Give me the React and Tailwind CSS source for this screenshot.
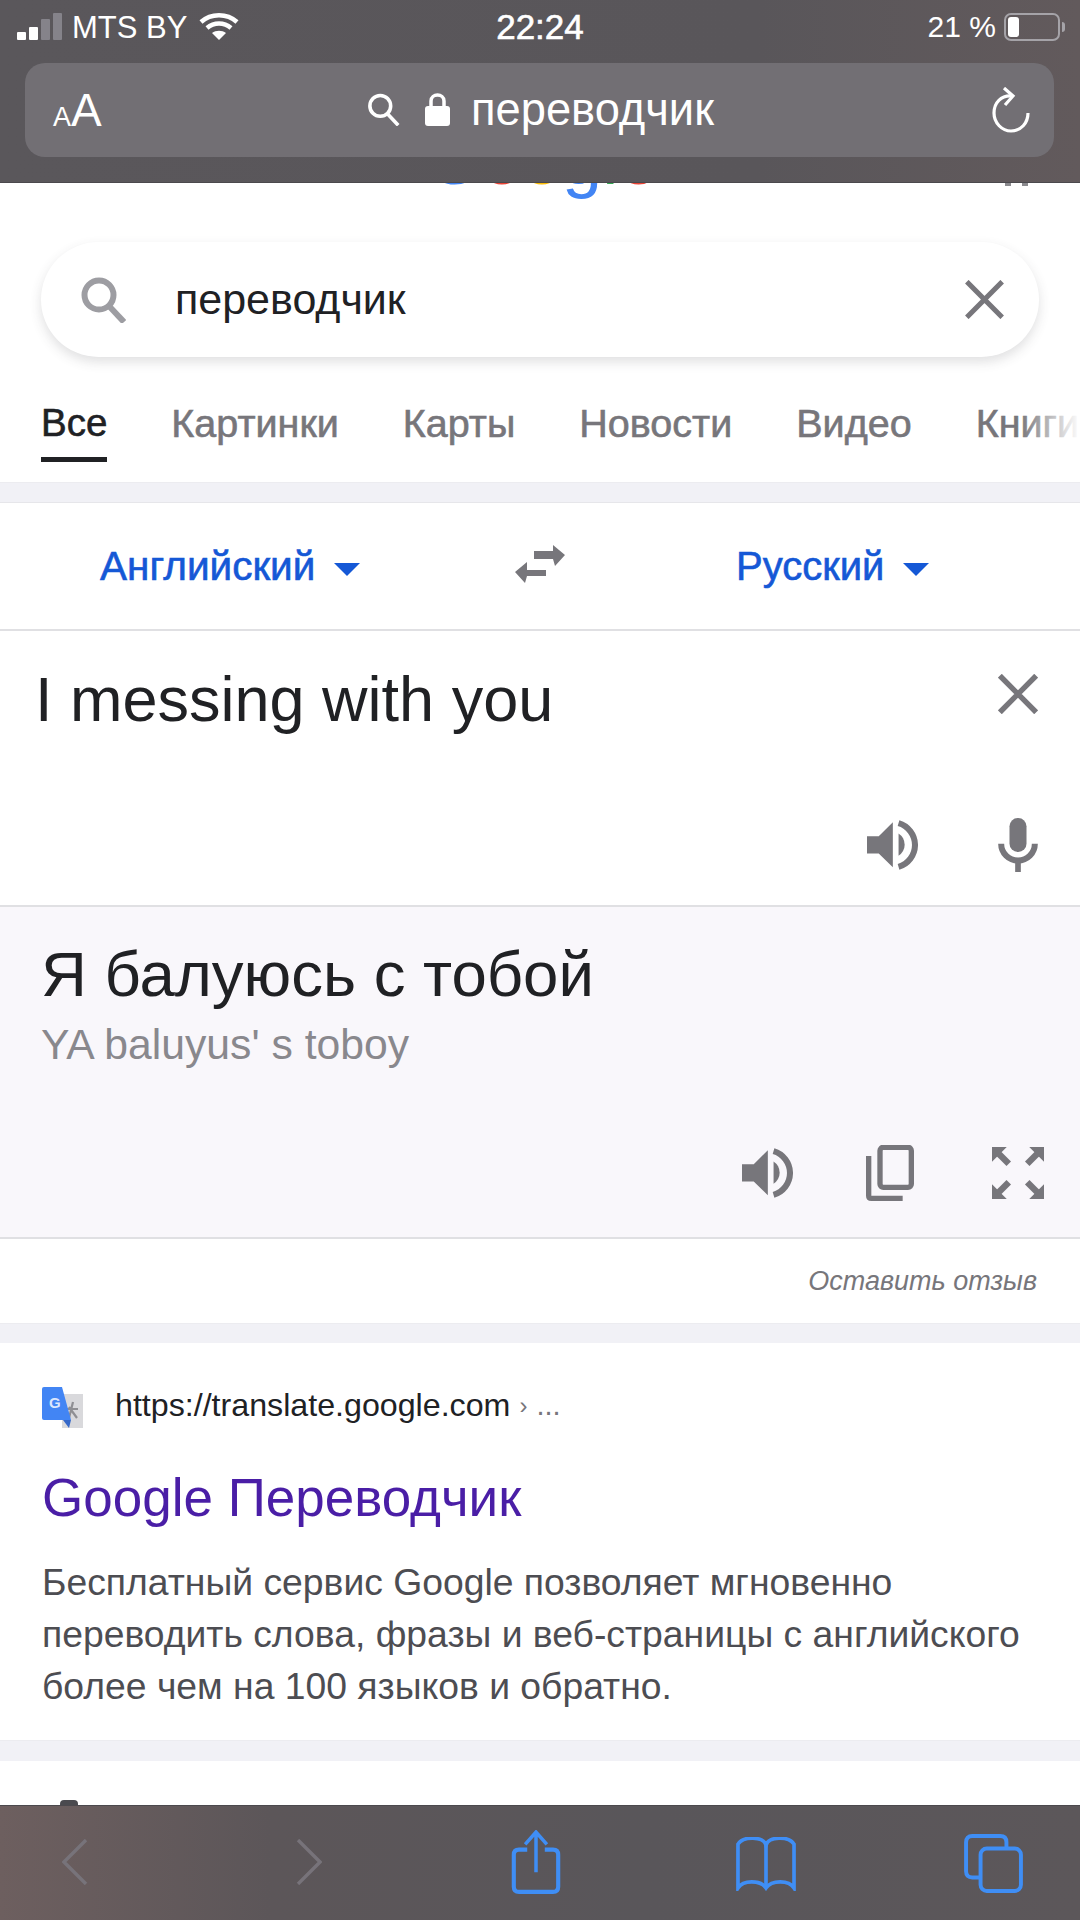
import React from "react";

const Speaker = ({ className }) => (
  <svg viewBox="0 0 152 148" className={className} fill="#77767b">
    <polygon points="0,48 35,48 77,6 77,140 35,99 0,99" />
    <path d="M94 40 A39 39 0 0 1 94 106 Z" />
    <path d="M94 9 A67.6 67.6 0 0 1 94 139" fill="none" stroke="#77767b" strokeWidth="18" />
  </svg>
);

const Cross = ({ className, width = 14 }) => (
  <svg viewBox="0 0 117 118" className={className} stroke="#77767b" strokeWidth={width} fill="none">
    <path d="M5 5 L112 113 M112 5 L5 113" />
  </svg>
);

const Mic = ({ className }) => (
  <svg viewBox="0 0 119 162" className={className} fill="#77767b">
    <rect x="34" y="0" width="51" height="102" rx="25" />
    <path d="M9 77 A50.5 50.5 0 0 0 110 77" fill="none" stroke="#77767b" strokeWidth="18" />
    <rect x="51" y="128" width="17" height="34" />
  </svg>
);

const Copy = ({ className }) => (
  <svg viewBox="0 0 144 168" className={className} fill="none" stroke="#77767b">
    <rect x="42" y="7" width="94" height="120" rx="10" strokeWidth="16" />
    <path d="M8 33 V152 Q8 160 16 160 H110" strokeWidth="16" />
  </svg>
);

const Corner = ({ t }) => (
  <g transform={t}>
    <polygon points="0,0 44,0 0,44" fill="#77767b" />
    <path d="M14 14 L50 50" stroke="#77767b" strokeWidth="19" />
  </g>
);

const Expand = ({ className }) => (
  <svg viewBox="0 0 155 155" className={className}>
    <Corner t="" />
    <Corner t="translate(155 0) scale(-1 1)" />
    <Corner t="translate(0 155) scale(1 -1)" />
    <Corner t="translate(155 155) scale(-1 -1)" />
  </svg>
);

const Swap = ({ className }) => (
  <svg viewBox="0 0 50 38" className={className} fill="#77767b">
    <polygon points="19,6 38,6 38,0 50,10 40,21 38,14 19,14" />
    <polygon points="31,25 12,25 12,17 0,27 10,38 12,31 31,31" />
  </svg>
);

const Tri = ({ className }) => (
  <svg viewBox="0 0 26 13" className={className} fill="#1558d6">
    <polygon points="0,0 26,0 13,13" />
  </svg>
);

const Magnifier = ({ className, color, width }) => (
  <svg viewBox="0 0 45 46" className={className} fill="none" stroke={color} strokeWidth={width}>
    <circle cx="18" cy="18" r="14.5" />
    <path d="M28 29 L43 45" />
  </svg>
);

const Wifi = ({ className }) => (
  <svg viewBox="0 0 40 27" className={className} fill="none" stroke="#fff" strokeWidth="4.5">
    <path d="M2 9 C12 0 28 0 38 9" />
    <path d="M8 15 C15 9 25 9 32 15" />
    <path d="M20 27 L13 20 C17 17 23 17 27 20 Z" fill="#fff" stroke="none" />
  </svg>
);

const Lock = ({ className }) => (
  <svg viewBox="0 0 25 33" className={className} fill="#fff">
    <path d="M6 14 V8 C6 0 19 0 19 8 V14" fill="none" stroke="#fff" strokeWidth="3.5" />
    <rect x="0" y="13" width="25" height="20" rx="3" />
  </svg>
);

const Reload = ({ className }) => (
  <svg viewBox="0 0 38 46" className={className} fill="none" stroke="#fff" strokeWidth="3.2">
    <path d="M20 9 C9 8 2 16 2 26 C2 36 10 44 19 44 C29 44 36 36 36 26" />
    <path d="M12 1 L21 9 L13 18" />
  </svg>
);

const Chevron = ({ className, d }) => (
  <svg viewBox="0 0 26 46" className={className} fill="none" stroke="#77737a" strokeWidth="3.4">
    <path d={d} />
  </svg>
);

const Share = ({ className }) => (
  <svg viewBox="0 0 47 62" className={className} fill="none" stroke="#3f8ef5" strokeWidth="3.4">
    <path d="M15 19 H7 Q2 19 2 24 V55 Q2 60 7 60 H40 Q45 60 45 55 V24 Q45 19 40 19 H32" strokeWidth="4" />
    <path d="M23.5 41 V2 M13 14 L23.5 2 L34 14" />
  </svg>
);

const Book = ({ className }) => (
  <svg viewBox="0 0 59 53" className={className} fill="none" stroke="#3f8ef5" strokeWidth="3.6">
    <path d="M29.5 8 C27 -1 7 -1 2 7 V50 C7 42 24 42 29.5 50 C35 42 52 42 57 50 V7 C52 -1 32 -1 29.5 8 Z" />
    <path d="M29.5 8 V50" />
  </svg>
);

const TabsIcon = ({ className }) => (
  <svg viewBox="0 0 57 57" className={className} fill="none" stroke="#3f8ef5" strokeWidth="3.8">
    <path d="M15 42 H8 Q2 42 2 36 V8 Q2 2 8 2 H35 Q41 2 41 8 V13" />
    <rect x="16" y="14" width="39" height="41" rx="6" />
  </svg>
);

const Favicon = ({ className }) => (
  <svg viewBox="0 0 41 41" className={className}>
    <rect x="20" y="7" width="21" height="34" fill="#d9d9dc" />
    <path d="M31 15 L27 31 M24 22 L36 22 M27 20 L35 31" stroke="#8f8f93" strokeWidth="2.2" />
    <path d="M2 0 H20 L29 33 H2 Q0 33 0 31 V2 Q0 0 2 0 Z" fill="#4285f4" />
    <polygon points="21,33 29,33 27,41" fill="#3568c9" />
    <text x="7" y="21" fontSize="15" fontWeight="700" fill="#dbe7fd" fontFamily="Liberation Sans">G</text>
  </svg>
);

const medium = "[-webkit-text-stroke:0.6px_currentColor]";

export default function App() {
  return (
    <div className="w-[1080px] h-[1920px] flex flex-col overflow-hidden bg-white font-['Liberation_Sans','Noto_Sans',sans-serif]">
      {/* Safari top */}
      <header className="h-[183px] shrink-0 flex flex-col bg-[linear-gradient(90deg,#5a575b_0%,#59565a_70%,#625a5c_100%)] text-white border-b border-[#4b494d]">
        <div className="h-[63px] grid grid-cols-3 items-start pl-[17px] pr-[15px] pt-[12px]">
          <div className="flex items-center h-[29px]">
            <div className="flex items-end gap-[3px] h-[27px] w-[45px]">
              <span className="w-[9px] h-[8px] bg-white rounded-[1px]" />
              <span className="w-[9px] h-[13px] bg-white rounded-[1px]" />
              <span className="w-[9px] h-[21px] bg-[#85838a] rounded-[1px]" />
              <span className="w-[9px] h-[27px] bg-[#85838a] rounded-[1px]" />
            </div>
            <span className="ml-[10px] mt-[1px] text-[31px] leading-none whitespace-nowrap">MTS BY</span>
            <Wifi className="ml-[12px] w-[40px] h-[27px]" />
          </div>
          <div className={`text-center text-[35px] leading-[29px] pr-[2px] ${medium}`}>22:24</div>
          <div className="flex items-center justify-end h-[29px]">
            <span className="text-[30px] leading-none whitespace-nowrap">21 %</span>
            <div className="ml-[8px] w-[56px] h-[28px] rounded-[7px] border-2 border-[#a5a3a8] p-[2px] flex">
              <span className="w-[11px] bg-white rounded-[3px]" />
            </div>
            <span className="ml-[2px] w-[3px] h-[10px] bg-[#a5a3a8] rounded-r-sm" />
          </div>
        </div>
        <div className="mx-[25px] w-[1029px] h-[94px] rounded-[20px] bg-[#726f74] flex items-center justify-between pl-[28px] pr-[24px]">
          <div className="flex items-baseline w-[50px] leading-none whitespace-nowrap">
            <span className="text-[27px]">A</span>
            <span className="text-[46px]">A</span>
          </div>
          <div className="flex items-center ml-[-14px]">
            <Magnifier className="w-[33px] h-[33px]" color="#fff" width="5" />
            <Lock className="ml-[25px] w-[25px] h-[33px]" />
            <span className="ml-[21px] text-[45.3px] leading-none">переводчик</span>
          </div>
          <Reload className="w-[38px] h-[46px]" />
        </div>
      </header>

      <main className="flex-1 min-h-0 overflow-hidden flex flex-col">
        {/* Header with clipped logo and search */}
        <div className="relative h-[59px] shrink-0 overflow-hidden">
          <div className="absolute left-[426px] top-[-62px] text-[72px] leading-[77px] whitespace-nowrap">
            <span className="text-[#4285f4]">G</span>
            <span className="text-[#ea4335]">o</span>
            <span className="text-[#fbbc05]">o</span>
            <span className="text-[#4285f4]">g</span>
            <span className="text-[#34a853]">l</span>
            <span className="text-[#ea4335]">e</span>
          </div>
          <div className="absolute left-[1005px] top-0 w-[6px] h-[3px] bg-[#8b8a8e]" />
          <div className="absolute left-[1022px] top-0 w-[6px] h-[3px] bg-[#8b8a8e]" />
        </div>
        <div className="mx-[41px] h-[115px] shrink-0 rounded-full bg-white shadow-[0_5px_12px_rgba(60,60,70,0.16)] flex items-center pl-[40px] pr-[35px]">
          <Magnifier className="w-[45px] h-[46px]" color="#9d9da2" width="6" />
          <span className="ml-[49px] text-[43px] leading-none text-[#202124]">переводчик</span>
          <Cross className="ml-auto w-[39px] h-[39px]" width="15" />
        </div>

        {/* Tabs */}
        <nav className="relative h-[126px] shrink-0 flex pl-[41px] gap-[64px] pt-[46px] overflow-hidden border-b border-[#ececf0] whitespace-nowrap">
          <div className="flex flex-col">
            <span className={`text-[38.5px] leading-[40px] text-[#202124] ${medium}`}>Все</span>
            <span className="mt-[14px] h-[5px] bg-[#202124]" />
          </div>
          <span className={`text-[39.5px] leading-[40px] text-[#77767b] ${medium}`}>Картинки</span>
          <span className={`text-[39.5px] leading-[40px] text-[#77767b] ${medium}`}>Карты</span>
          <span className={`text-[39.5px] leading-[40px] text-[#77767b] ${medium}`}>Новости</span>
          <span className={`text-[39.5px] leading-[40px] text-[#77767b] ${medium}`}>Видео</span>
          <span className={`text-[39.5px] leading-[40px] text-[#77767b] ${medium}`}>Книги</span>
          <div className="absolute right-0 top-0 bottom-0 w-[60px] bg-gradient-to-r from-transparent to-white" />
        </nav>
        <div className="h-[20px] shrink-0 bg-[#f1f1f6] border-b border-[#e6e6ea]" />

        {/* Language row */}
        <div className="h-[128px] shrink-0 flex items-center border-b-2 border-[#e0e0e3] relative">
          <div className="flex items-center pl-[100px] w-[515px]">
            <span className={`text-[40.5px] leading-none text-[#1558d6] ${medium}`}>Английский</span>
            <Tri className="ml-[19px] mt-[6px] w-[26px] h-[13px]" />
          </div>
          <Swap className="w-[50px] h-[38px] mt-[-4px]" />
          <div className="flex items-center ml-[171px]">
            <span className={`text-[40px] leading-none text-[#1558d6] ${medium}`}>Русский</span>
            <Tri className="ml-[19px] mt-[6px] w-[26px] h-[13px]" />
          </div>
        </div>

        {/* Input */}
        <section className="h-[276px] shrink-0 border-b-2 border-[#e0e0e3] flex flex-col pl-[35px] pr-[42px]">
          <div className="flex items-start justify-between pt-[34px]">
            <span className="text-[63px] leading-[68px] text-[#202124]">I messing with you</span>
            <Cross className="mt-[9px] w-[40px] h-[40px]" width="16" />
          </div>
          <div className="flex justify-end items-center mt-[85px]">
            <Speaker className="w-[51px] h-[50px] mr-[80px]" />
            <Mic className="w-[40px] h-[54px]" />
          </div>
        </section>

        {/* Output */}
        <section className="h-[332px] shrink-0 bg-[#f9f7fb] border-b-2 border-[#e0e0e3] flex flex-col pl-[41px] pr-[36px]">
          <div className="pt-[33px] text-[63.5px] leading-[68px] text-[#202124]">Я балуюсь с тобой</div>
          <div className="mt-[13px] text-[42.7px] leading-[46px] text-[#89888d]">YA baluyus' s toboy</div>
          <div className="flex justify-end items-center mt-[78px]">
            <Speaker className="w-[51px] h-[50px]" />
            <Copy className="ml-[73px] w-[48px] h-[56px]" />
            <Expand className="ml-[78px] w-[52px] h-[52px]" />
          </div>
        </section>

        {/* Feedback */}
        <div className="h-[84px] shrink-0 flex items-center justify-end pr-[43px]">
          <span className="italic text-[27px] leading-none text-[#77767b]">Оставить отзыв</span>
        </div>
        <div className="h-[20px] shrink-0 bg-[#f1f1f6] border-t border-[#ececf0]" />

        {/* Result */}
        <section className="h-[397px] shrink-0 flex flex-col px-[42px]">
          <div className="flex items-center mt-[44px] h-[41px]">
            <Favicon className="w-[41px] h-[41px]" />
            <span className="ml-[32px] mb-[4px] text-[32.2px] leading-none text-[#202124]">https://translate.google.com</span>
            <span className="ml-[9px] mb-[4px] text-[24px] leading-none text-[#77767b]">›</span>
            <span className="ml-[9px] mb-[4px] text-[29px] leading-none text-[#77767b]">...</span>
          </div>
          <div className="mt-[41px] text-[53px] leading-[58px] text-[#4a1ea6]">Google Переводчик</div>
          <p className="mt-[29px] text-[37.3px] leading-[52px] text-[#4d4d52] whitespace-nowrap">
            Бесплатный сервис Google позволяет мгновенно
            <br />
            переводить слова, фразы и веб-страницы с английского
            <br />
            более чем на 100 языков и обратно.
          </p>
        </section>
        <div className="h-[21px] shrink-0 bg-[#f1f1f6] border-t border-[#ececf0]" />
        <div className="mt-[39px] ml-[60px] w-[18px] h-[8px] rounded-full bg-[#4a4a4f] shrink-0" />
      </main>

      {/* Safari bottom */}
      <footer className="h-[115px] shrink-0 relative z-10 bg-[linear-gradient(90deg,#6d5f5f_0%,#5c5659_25%,#59565a_60%,#5c575a_100%)] border-t border-[#4b494d] flex items-start pt-[24px]">
        <Chevron className="ml-[62px] mt-[9px] w-[26px] h-[46px]" d="M24 1 L2 23 L24 45" />
        <Chevron className="ml-[208px] mt-[9px] w-[26px] h-[46px]" d="M2 1 L24 23 L2 45" />
        <Share className="ml-[189px] w-[50px] h-[64px]" />
        <Book className="ml-[174px] mt-[7px] w-[62px] h-[54px]" />
        <TabsIcon className="ml-[167px] mt-[4px] w-[59px] h-[59px]" />
      </footer>
    </div>
  );
}
